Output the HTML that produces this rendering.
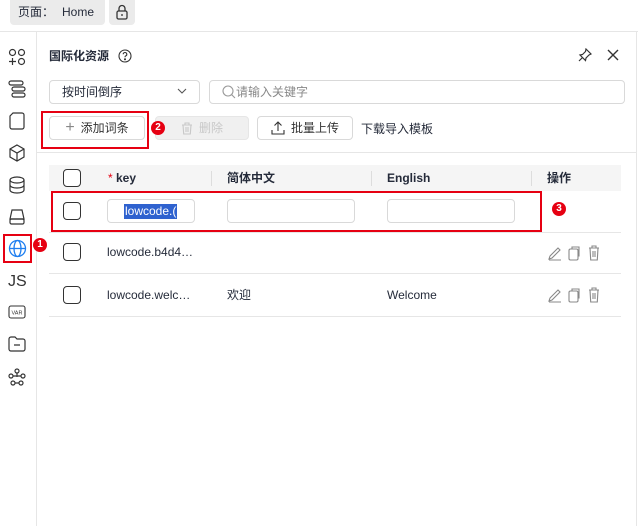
<!DOCTYPE html>
<html><head><meta charset="utf-8"><style>
*{box-sizing:border-box;margin:0;padding:0}
body{width:638px;height:526px;background:#fff;font-family:"Liberation Sans","Noto Sans CJK SC",sans-serif;font-size:12px;line-height:14px;color:#252b3a;position:relative;overflow:hidden}
.a{position:absolute;line-height:14px;white-space:nowrap}
.cb{position:absolute;width:18px;height:18px;border:1.3px solid #333;border-radius:4px;background:#fff}
.btn{position:absolute;border:1px solid #d9d9d9;border-radius:4px;height:24px;font-size:12px;display:flex;align-items:center;justify-content:center;color:#333;line-height:14px}
.inp{position:absolute;border:1px solid #d9d9d9;border-radius:4px;height:24px;background:#fff}
.red{position:absolute;border:2px solid #e60012}
.badge{position:absolute;width:14px;height:14px;border-radius:7px;background:#e60012;color:#fff;font-size:10px;font-weight:bold;text-align:center;line-height:14px;z-index:5}
svg{position:absolute}
</style></head><body>
<div class="a" style="left:10px;top:0;width:95px;height:25px;background:#ebebeb;border-radius:0 0 4px 4px"></div>
<div class="a" style="left:18px;top:5px">页面：</div>
<div class="a" style="left:62px;top:5px">Home</div>
<div class="a" style="left:109px;top:0;width:26px;height:25px;background:#ebebeb;border-radius:0 0 4px 4px"></div>
<svg style="left:115px;top:4px" width="14" height="16" viewBox="0 0 14 16" fill="none" stroke="#333" stroke-width="1.3"><path d="M4 7V4.5a3 3 0 0 1 6 0V7"/><rect x="2" y="7" width="10" height="8" rx="1.5"/><path d="M7 10v2"/></svg>
<div class="a" style="left:0;top:31px;width:638px;height:1px;background:#e6e6e6"></div>
<div class="a" style="left:36px;top:32px;width:1px;height:494px;background:#e6e6e6"></div>
<div class="a" style="left:636px;top:32px;width:1px;height:494px;background:#e6e6e6"></div>
<svg style="left:8px;top:48px" width="18" height="18" viewBox="0 0 18 18" fill="none" stroke="#333" stroke-width="1.2"><circle cx="4.5" cy="4.5" r="3"/><circle cx="13.5" cy="4.5" r="3"/><circle cx="13.5" cy="13.5" r="3"/><path d="M4.5 10v7M1 13.5h7"/></svg>
<svg style="left:8px;top:80px" width="18" height="18" viewBox="0 0 18 18" fill="none" stroke="#333" stroke-width="1.2"><rect x="1" y="1" width="14" height="4" rx="2"/><rect x="4" y="7" width="13" height="4" rx="2"/><rect x="4" y="13" width="13" height="4" rx="2"/></svg>
<svg style="left:9px;top:112px" width="16" height="18" viewBox="0 0 16 18" fill="none" stroke="#333" stroke-width="1.2"><path d="M1 4l3-3h9a2 2 0 0 1 2 2v12a2 2 0 0 1-2 2H3a2 2 0 0 1-2-2z"/></svg>
<svg style="left:8px;top:144px" width="18" height="18" viewBox="0 0 18 18" fill="none" stroke="#333" stroke-width="1.2"><path d="M9 1l7 4v8l-7 4-7-4V5zM2 5l7 4 7-4M9 9v8"/></svg>
<svg style="left:8px;top:176px" width="18" height="18" viewBox="0 0 18 18" fill="none" stroke="#333" stroke-width="1.2"><ellipse cx="9" cy="4" rx="7" ry="3"/><path d="M2 4v10c0 1.7 3 3 7 3s7-1.3 7-3V4M2 9c0 1.7 3 3 7 3s7-1.3 7-3"/></svg>
<svg style="left:8px;top:208px" width="18" height="18" viewBox="0 0 18 18" fill="none" stroke="#333" stroke-width="1.2"><path d="M4 2h10l2 9H2z"/><rect x="2" y="11" width="14" height="5" rx="1.5"/></svg>
<div class="red" style="left:3px;top:234px;width:29px;height:29px"></div>
<svg style="left:8px;top:239px" width="19" height="19" viewBox="0 0 19 19" fill="none" stroke="#1e7ef0" stroke-width="1.3"><circle cx="9.5" cy="9.5" r="8"/><ellipse cx="9.5" cy="9.5" rx="3.5" ry="8"/><path d="M1.5 9.5h16"/></svg>
<div class="badge" style="left:33px;top:238px">1</div>
<div class="a" style="left:8px;top:273px;font-size:16px;line-height:18px;color:#333">JS</div>
<svg style="left:8px;top:305px" width="18" height="14" viewBox="0 0 18 14" fill="none" stroke="#333" stroke-width="1.1"><rect x="1" y="1" width="16" height="12" rx="2"/><text x="9" y="9.5" font-size="5.5" text-anchor="middle" fill="#333" stroke="none" font-family="Liberation Sans">VAR</text></svg>
<svg style="left:8px;top:336px" width="18" height="16" viewBox="0 0 18 16" fill="none" stroke="#333" stroke-width="1.2"><path d="M1 3a2 2 0 0 1 2-2h4l2 2h6a2 2 0 0 1 2 2v8a2 2 0 0 1-2 2H3a2 2 0 0 1-2-2z M6 9h6"/></svg>
<svg style="left:8px;top:368px" width="18" height="18" viewBox="0 0 18 18" fill="none" stroke="#333" stroke-width="1.2"><circle cx="9" cy="3" r="2"/><circle cx="3" cy="8" r="2"/><circle cx="15" cy="8" r="2"/><circle cx="5" cy="15" r="2"/><circle cx="13" cy="15" r="2"/><path d="M9 5v4M5 8h8M7 15h4"/></svg>
<div class="a" style="left:49px;top:49px;font-weight:bold">国际化资源</div>
<svg style="left:118px;top:49px" width="14" height="14" viewBox="0 0 14 14" fill="none" stroke="#333" stroke-width="1.1"><circle cx="7" cy="7" r="6"/><path d="M5.2 5.3a1.8 1.8 0 1 1 2.4 1.7c-.5.2-.6.6-.6 1.2"/><circle cx="7" cy="10.3" r=".5" fill="#333"/></svg>
<svg style="left:578px;top:48px" width="14" height="14" viewBox="0 0 14 14" fill="none" stroke="#333" stroke-width="1.2"><path d="M8 1l5 5-2 1-3 3-.5 2.5L2 7l2.5-.5 3-3zM4.5 9.5L1 13"/></svg>
<svg style="left:607px;top:49px" width="12" height="12" viewBox="0 0 12 12" stroke="#333" stroke-width="1.4"><path d="M1 1l10 10M11 1L1 11"/></svg>
<div class="inp" style="left:49px;top:80px;width:151px"></div>
<div class="a" style="left:62px;top:85px">按时间倒序</div>
<svg style="left:177px;top:88px" width="10" height="6" viewBox="0 0 10 6" fill="none" stroke="#555" stroke-width="1.1"><path d="M1 1l4 4 4-4"/></svg>
<div class="inp" style="left:209px;top:80px;width:416px"></div>
<svg style="left:222px;top:85px" width="14" height="14" viewBox="0 0 14 14" fill="none" stroke="#999" stroke-width="1.1"><circle cx="6" cy="6" r="5"/><path d="M9.5 9.5L13 13"/></svg>
<div class="a" style="left:236px;top:85px;color:#888">请输入关键字</div>
<div class="red" style="left:41px;top:111px;width:108px;height:38px"></div>
<div class="btn" style="left:49px;top:116px;width:96px"><span style="font-size:16px;color:#888;margin-right:6px;font-weight:300">+</span>添加词条</div>
<div class="btn" style="left:155px;top:116px;width:94px;background:#f0f0f0;border-color:#e6e6e6;color:#c8c8c8">
<svg style="position:static;margin-right:6px" width="12" height="13" viewBox="0 0 12 13" fill="none" stroke="#c8c8c8" stroke-width="1.1"><path d="M1 3h10M4 3V1h4v2M2 3l.7 9h6.6L10 3M5 5v5M7 5v5"/></svg>删除</div>
<div class="badge" style="left:151px;top:121px">2</div>
<div class="btn" style="left:257px;top:116px;width:96px"><svg style="position:static;margin-right:6px" width="14" height="14" viewBox="0 0 14 14" fill="none" stroke="#333" stroke-width="1.1"><path d="M7 10V1M3.5 4.5L7 1l3.5 3.5M1 9v4h12V9"/></svg>批量上传</div>
<div class="a" style="left:361px;top:122px">下载导入模板</div>
<div class="a" style="left:37px;top:152px;width:599px;height:1px;background:#e6e6e6"></div>
<div class="a" style="left:49px;top:165px;width:572px;height:26px;background:#f5f5f5"></div>
<div class="cb" style="left:63px;top:169px"></div>
<div class="a" style="left:108px;top:171px;font-weight:bold"><span style="color:#e60012;font-weight:normal">*</span> key</div>
<div class="a" style="left:211px;top:171px;width:1px;height:15px;background:#ddd"></div>
<div class="a" style="left:227px;top:171px;font-weight:bold">简体中文</div>
<div class="a" style="left:371px;top:171px;width:1px;height:15px;background:#ddd"></div>
<div class="a" style="left:387px;top:171px;font-weight:bold">English</div>
<div class="a" style="left:531px;top:171px;width:1px;height:15px;background:#ddd"></div>
<div class="a" style="left:547px;top:171px;font-weight:bold">操作</div>
<div class="red" style="left:51px;top:191px;width:491px;height:41px"></div>
<div class="cb" style="left:63px;top:202px"></div>
<div class="inp" style="left:107px;top:199px;width:88px"></div>
<div class="a" style="left:124px;top:204px;background:#2f62cf;color:#fff;padding:0 1px;height:15px;line-height:15px">lowcode.(</div>
<div class="inp" style="left:227px;top:199px;width:128px"></div>
<div class="inp" style="left:387px;top:199px;width:128px"></div>
<div class="badge" style="left:552px;top:202px">3</div>
<div class="a" style="left:49px;top:232px;width:572px;height:1px;background:#e6e6e6"></div>
<div class="cb" style="left:63px;top:243px"></div>
<div class="a" style="left:107px;top:245px">lowcode.b4d4…</div>
<div class="a" style="left:49px;top:273px;width:572px;height:1px;background:#e6e6e6"></div>
<div class="cb" style="left:63px;top:286px"></div>
<div class="a" style="left:107px;top:288px">lowcode.welc…</div>
<div class="a" style="left:227px;top:288px">欢迎</div>
<div class="a" style="left:387px;top:288px">Welcome</div>
<div class="a" style="left:49px;top:316px;width:572px;height:1px;background:#e6e6e6"></div>
<svg style="left:548px;top:245px" width="52" height="16" viewBox="0 0 52 16" fill="none" stroke="#888" stroke-width="1.1"><path d="M1 14l1-3 8-8 2 2-8 8zM1 15h12"/><rect x="21" y="4" width="9" height="11" rx="1.5"/><path d="M24 4V2h7v9h-1"/><path d="M41 3h10M44 3V1h4v2M42 3l.7 12h6.6L50 3M45 6v6M47 6v6"/></svg>
<svg style="left:548px;top:287px" width="52" height="16" viewBox="0 0 52 16" fill="none" stroke="#888" stroke-width="1.1"><path d="M1 14l1-3 8-8 2 2-8 8zM1 15h12"/><rect x="21" y="4" width="9" height="11" rx="1.5"/><path d="M24 4V2h7v9h-1"/><path d="M41 3h10M44 3V1h4v2M42 3l.7 12h6.6L50 3M45 6v6M47 6v6"/></svg>
</body></html>
